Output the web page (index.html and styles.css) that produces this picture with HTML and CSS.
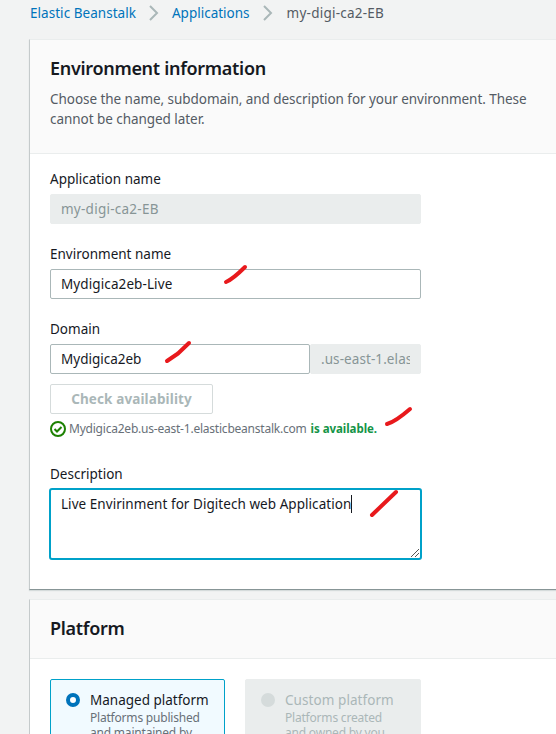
FILE: index.html
```html
<!DOCTYPE html>
<html lang="en">
<head>
<meta charset="utf-8">
<title>Elastic Beanstalk</title>
<link rel="stylesheet" href="styles.css">
</head>
<body>
<nav class="breadcrumbs">
  <a class="link crumb-service">Elastic Beanstalk</a>
  <svg class="chevron" viewBox="0 0 10 16"><path d="M1 1l7 7-7 7"/></svg>
  <a class="link crumb-apps">Applications</a>
  <svg class="chevron" viewBox="0 0 10 16"><path d="M1 1l7 7-7 7"/></svg>
  <span class="crumb-current">my-digi-ca2-EB</span>
</nav>
<main>
  <section class="card">
    <header class="card-header">
      <h2>Environment information</h2>
      <p class="intro">Choose the name, subdomain, and description for your environment. These<br>cannot be changed later.</p>
    </header>
    <div class="card-body">
      <div class="field">
        <label>Application name</label>
        <div class="input disabled app-value">my-digi-ca2-EB</div>
      </div>
      <div class="field">
        <label>Environment name</label>
        <div class="input"><span class="env-value">Mydigica2eb-Live</span>
          <svg class="mark mark-env" viewBox="0 0 26 22"><path d="M3 19Q10 16 22 4"/></svg>
        </div>
      </div>
      <div class="field domain">
        <label>Domain</label>
        <div class="domain-row">
          <div class="input"><span class="domain-value">Mydigica2eb</span>
            <svg class="mark mark-domain" viewBox="0 0 28 24"><path d="M3 21L14 13.500L25 3"/></svg>
          </div>
          <div class="input disabled suffix"><span>.us-east-1.elasticbeanstalk.com</span></div>
        </div>
        <div class="button">Check availability</div>
        <div class="status">
          <svg class="ok" viewBox="0 0 16 16"><circle cx="8" cy="8" r="7"/><path d="M4.500 8l2.500 2.500 4.500-4.500"/></svg>
          <span class="host">Mydigica2eb.us-east-1.elasticbeanstalk.com</span><b>is available.</b>
          <svg class="mark mark-status" viewBox="0 0 30 22"><path d="M3 19Q11 17 26 4"/></svg>
        </div>
      </div>
      <div class="field">
        <label>Description</label>
        <div class="textarea"><span class="description">Live Envirinment for Digitech web Application</span><i class="caret"></i>
          <svg class="mark mark-desc" viewBox="0 0 30 30"><path d="M3 27L27 4"/></svg>
          <svg class="grip" viewBox="0 0 8 8"><path d="M0 8L8 0M4 8l4-4"/></svg>
        </div>
      </div>
    </div>
  </section>
  <section class="card platform">
    <header class="card-header"><h2>Platform</h2></header>
    <div class="tiles">
      <div class="tile selected"><i class="radio"></i>
        <div><div class="tile-title">Managed platform</div><div class="tile-text">Platforms published<br>and maintained by</div></div>
      </div>
      <div class="tile inactive"><i class="radio"></i>
        <div><div class="tile-title">Custom platform</div><div class="tile-text">Platforms created<br>and owned by you.</div></div>
      </div>
    </div>
  </section>
</main>
</body>
</html>
```
FILE: styles.css
```css
* { box-sizing: border-box; }
body {
  margin: 0;
  height: 734px;
  overflow: hidden;
  background: #f2f3f3;
  color: #16191f;
  font: 13.500px/20px "Noto Sans", "Open Sans", sans-serif;
  letter-spacing: 0;
}
.breadcrumbs { display: flex; align-items: center; height: 39px; padding: 0 0 13px 30px; color: #545b64; white-space: nowrap; }
.link { color: #0073bb; }
.crumb-service { letter-spacing: 0.04px; }
.crumb-current { margin-left: 1px; letter-spacing: 0.24px; }
.chevron { width: 10px; height: 16px; margin: 0 13px; fill: none; stroke: #aab7b8; stroke-width: 2; }
main { margin-left: 29px; }
.card { height: 551px; background: #fff; border: 1px solid #eaeded; border-right: 0; border-left-color: #c5cacb; border-bottom-color: #879596; box-shadow: 0 1px 1px #d5dbdb; }
.card-header { height: 114px; padding: 17px 20px 0; background: #fafafa; border-bottom: 1px solid #eaeded; }
h2 { margin: 0; font-size: 18px; line-height: 22px; font-weight: 600; letter-spacing: -0.3px; }
.intro { margin: 10px 0 0; color: #545b64; letter-spacing: -0.05px; white-space: nowrap; }
.card-body { padding: 15px 20px; }
.field { width: 371px; margin-bottom: 20px; }
label { display: block; height: 20px; margin-bottom: 5px; }
.input { position: relative; height: 30px; padding: 4px 10px; border: 1px solid #aab7b8; border-radius: 2px; background: #fff; white-space: nowrap; }
.disabled { background: #eaeded; border-color: #eaeded; color: #879596; }
.app-value { letter-spacing: 0.25px; }
.env-value { letter-spacing: 0.1px; }
.domain { margin-bottom: 25px; }
.domain-row { display: grid; grid-template-columns: 260px 111px; }
.suffix span { display: block; overflow: hidden; letter-spacing: 0.08px; }
.button { width: 163px; height: 30px; margin-top: 10px; border: 1px solid #d5dbdb; border-radius: 2px; color: #aab7b8; font-weight: 700; letter-spacing: 0.12px; line-height: 28px; text-align: center; }
.status { position: relative; display: flex; align-items: center; height: 20px; margin-top: 5px; font-size: 12px; color: #687078; white-space: nowrap; }
.status b { color: #149447; margin-left: 4px; font-size: 11.500px; letter-spacing: -0.05px; }
.host { letter-spacing: -0.22px; }
.ok { width: 16px; height: 16px; margin-right: 3px; fill: none; stroke: #1d8102; stroke-width: 2; }
.textarea { position: relative; display: flex; width: 373px; height: 72px; margin: -1px; padding: 4px 10px; border: 2px solid #00a1c9; border-radius: 3px; white-space: nowrap; }
.description { letter-spacing: 0.05px; }
.caret { width: 1px; height: 18px; margin-top: 1px; background: #16191f; }
.mark { position: absolute; fill: none; stroke: #e8191c; stroke-width: 4; stroke-linecap: round; stroke-linejoin: round; }
.mark-env { left: 172px; top: -7px; width: 26px; height: 22px; }
.mark-domain { left: 113px; top: -5px; width: 28px; height: 24px; }
.mark-status { left: 334px; top: -14px; width: 30px; height: 22px; }
.mark-desc { left: 318px; top: -2px; width: 30px; height: 30px; }
.grip { position: absolute; right: 1px; bottom: 1px; width: 8px; height: 8px; stroke: #555; stroke-width: 1; }
.platform { height: 140px; margin-top: 9px; border-bottom: 0; box-shadow: none; overflow: hidden; }
.platform .card-header { height: 59px; padding-top: 17px; }
.tiles { display: grid; grid-template-columns: 175px 176px; gap: 20px; padding: 20px; }
.tile { display: flex; height: 100px; padding: 10px 15px; border: 1px solid #00a1c9; border-radius: 2px; background: #f1faff; white-space: nowrap; }
.radio { flex: none; width: 14px; height: 14px; margin: 3px 10px 0 0; border: 4px solid #0073bb; border-radius: 50%; background: #fff; }
.tile-text { margin-top: 0; font-size: 12px; line-height: 15px; letter-spacing: -0.2px; color: #687078; }
.inactive { background: #eaeded; border-color: #eaeded; color: #aab7b8; }
.inactive .tile-title { letter-spacing: 0.07px; }
.inactive .tile-text { color: #aab7b8; }
.inactive .radio { border: 0; background: #d5dbdb; }
```
